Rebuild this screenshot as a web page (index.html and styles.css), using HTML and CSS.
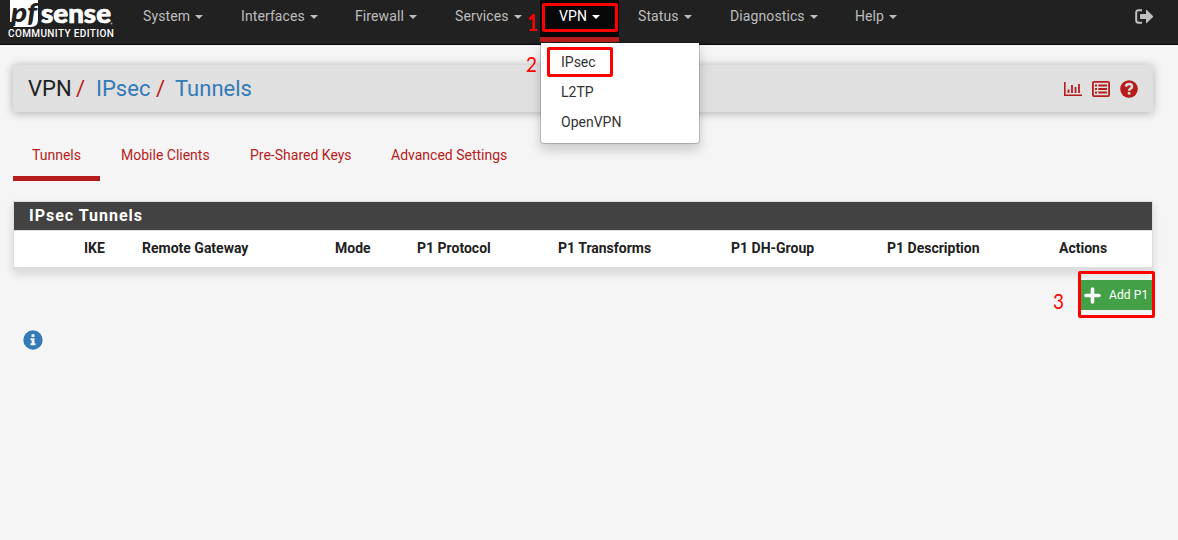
FILE: index.html
```
<!DOCTYPE html>
<html lang="en">
<head>
<meta charset="utf-8">
<title>VPN: IPsec: Tunnels</title>
<link rel="stylesheet" href="styles.css">
</head>
<body>
<header class="navbar">
  <a class="brand">
    <svg class="logo" width="106" height="28" viewBox="0 0 106 28">
      <path d="M2 0H30V20Q30 27 23 27H5.5L6.5 22H2Z" fill="#fff"/>
      <text class="logo-pf" x="3" y="22" textLength="26" lengthAdjust="spacingAndGlyphs">pf</text>
      <text class="logo-sense" x="33" y="22.5" textLength="70" lengthAdjust="spacingAndGlyphs">sense</text>
      <circle cx="103.5" cy="23.5" r="1" fill="#999"/>
    </svg>
    <span class="edition">COMMUNITY EDITION</span>
  </a>
  <nav class="menu">
    <a class="menu-item w-system">System<i class="caret"></i></a>
    <a class="menu-item w-interfaces">Interfaces<i class="caret"></i></a>
    <a class="menu-item w-firewall">Firewall<i class="caret"></i></a>
    <a class="menu-item w-services">Services<i class="caret"></i></a>
    <div class="menu-item w-vpn active">VPN<i class="caret"></i>
      <div class="dropdown"><a>IPsec</a><a>L2TP</a><a>OpenVPN</a></div>
    </div>
    <a class="menu-item w-status">Status<i class="caret"></i></a>
    <a class="menu-item w-diagnostics">Diagnostics<i class="caret"></i></a>
    <a class="menu-item">Help<i class="caret"></i></a>
  </nav>
  <svg class="logout" width="19" height="15" viewBox="0 0 19 14" preserveAspectRatio="none">
    <path d="M7 1.2H3.5Q1.2 1.2 1.2 3.5V10.5Q1.2 12.8 3.5 12.8H7" fill="none" stroke="#c0c0c0" stroke-width="2"/>
    <path d="M5.6 4.6H11V1.2Q11 .3 11.8 1L18 6.5Q18.5 7 18 7.5L11.8 13Q11 13.6 11 12.8V9.4H5.6Q5 9.4 5 8.8V5.2Q5 4.6 5.6 4.6Z" fill="#c0c0c0"/>
  </svg>
</header>
<main class="page">
  <div class="header">
    <div class="crumbs"><span class="c1">VPN</span><b class="s1">/</b><a class="c2">IPsec</a><b class="s2">/</b><a class="c3">Tunnels</a></div>
    <div class="tools">
      <svg width="18" height="18" viewBox="0 0 18 18" fill="none" stroke="#b71c1c">
        <path d="M.8 2V15.2H18" stroke-width="1.6"/>
        <path d="M4.5 9.5V13M8 5V13M11.5 7V13M15 4V13" stroke-width="1.8"/>
      </svg>
      <svg width="18" height="18" viewBox="0 0 18 18" fill="none" stroke="#b71c1c">
        <rect x=".9" y="1.9" width="16.2" height="14.2" rx="1" stroke-width="1.8"/>
        <path d="M3 5.5H5M3 9H5M3 12.5H5M6.3 5.5H15M6.3 9H15M6.3 12.5H15" stroke-width="1.8"/>
      </svg>
      <svg width="18" height="18" viewBox="0 0 18 18">
        <circle cx="9" cy="9" r="8.8" fill="#b71c1c"/>
        <path d="M5.7 6.5Q6.6 3.9 9.1 3.9Q12 3.9 12 6.5Q12 7.9 10.5 8.6Q9.1 9.4 9.1 10.8" fill="none" stroke="#e0e0e0" stroke-width="2.5"/>
        <rect x="7.8" y="12.1" width="2.6" height="2.5" fill="#e0e0e0"/>
      </svg>
    </div>
  </div>
  <nav class="tabs">
    <a class="tab w-tunnels selected">Tunnels</a>
    <a class="tab w-mobile">Mobile Clients</a>
    <a class="tab w-keys">Pre-Shared Keys</a>
    <a class="tab">Advanced Settings</a>
  </nav>
  <section class="panel">
    <h2 class="panel-title">IPsec Tunnels</h2>
    <div class="columns"><span></span><span>IKE</span><span>Remote Gateway</span><span>Mode</span><span>P1 Protocol</span><span>P1 Transforms</span><span>P1 DH-Group</span><span>P1 Description</span><span>Actions</span></div>
  </section>
  <div class="actions">
    <a class="add">
      <svg width="17" height="17" viewBox="0 0 17 17"><path d="M8.5 2V15M2 8.5H15" stroke="#fff" stroke-width="3.6" stroke-linecap="round"/></svg>
      <span>Add P1</span>
    </a>
  </div>
  <svg class="info" width="20" height="20" viewBox="0 0 20 20">
    <circle cx="10" cy="10" r="9.7" fill="#337ab7"/>
    <path d="M8.5 4.3H11.5V7H8.5ZM7.5 8.2H11.5V13.2H12.6V15.2H7.5V13.2H8.6V10.2H7.5Z" fill="#f5f5f5"/>
  </svg>
</main>
<div class="mark box-vpn"></div>
<div class="mark box-ipsec"></div>
<div class="mark box-add"></div>
<span class="step step-1">1</span>
<span class="step step-2">2</span>
<span class="step step-3">3</span>
</body>
</html>
```
FILE: styles.css
```
* { box-sizing: border-box; }
body {
  margin: 0;
  height: 540px;
  overflow: hidden;
  background: #f5f5f5;
  color: #212121;
  font: 14px/20px Roboto, sans-serif;
}
.navbar {
  display: flex;
  height: 45px;
  background: #212121;
  border-bottom: 1px solid #080808;
}
.brand { width: 124px; padding-left: 8px; color: #fff; }
.logo { display: block; overflow: visible; }
.logo-pf { font: italic 900 26px Lato, sans-serif; fill: #212121; }
.logo-sense { font: 900 26px Lato, sans-serif; fill: #fff; stroke: #fff; stroke-width: .7px; }
.edition {
  display: block;
  width: 108px;
  font-size: 10px;
  line-height: 11px;
  font-weight: 500;
  letter-spacing: .38px;
  white-space: nowrap;
}
.menu { display: flex; flex: 1; }
.menu-item {
  position: relative;
  display: flex;
  height: 42px;
  padding: 6px 0 0 19px;
  color: #bdbdbd;
  letter-spacing: .1px;
  white-space: nowrap;
}
.caret {
  width: 0;
  height: 0;
  margin: 9px 0 0 5px;
  border: 4px solid transparent;
  border-top-color: currentColor;
  border-bottom: 0;
}
.w-system { width: 98px; }
.w-interfaces { width: 114px; }
.w-firewall { width: 100px; }
.w-services { width: 104px; }
.w-vpn { width: 79px; }
.w-status { width: 92px; }
.w-diagnostics { width: 125px; }
.active { background: #080808; border-bottom: 5px solid #b71c1c; color: #fff; }
.dropdown {
  position: absolute;
  top: 42px;
  left: 0;
  z-index: 2;
  width: 160px;
  height: 102px;
  padding: 5px 0;
  border: 1px solid rgba(0, 0, 0, .18);
  border-radius: 0 0 4px 4px;
  background: #fff;
  background-clip: padding-box;
  box-shadow: 0 6px 12px rgba(0, 0, 0, .175);
  color: #333;
  letter-spacing: 0;
}
.dropdown a { display: block; height: 30px; padding: 4px 20px; }
.logout { margin: 9px 24px 0 0; }
.page { padding: 20px 25px 0 13px; }
.header {
  display: flex;
  justify-content: space-between;
  height: 47px;
  padding: 15px 15px 0;
  background: #e0e0e0;
  border-radius: 2px;
  box-shadow: 0 1px 10px rgba(0, 0, 0, .3);
}
.crumbs { display: flex; margin-top: -1px; font-size: 22px; line-height: 20px; }
.crumbs a { color: #337ab7; }
.crumbs b { color: #b71c1c; font-weight: 400; }
.c1 { width: 48px; }
.s1 { width: 20px; }
.c2 { width: 60px; }
.s2 { width: 19px; }
.tools { display: flex; gap: 10px; }
.tabs { display: flex; gap: 2px; margin-top: 24px; }
.tab { height: 45px; padding: 9px 0 0 19px; color: #b71c1c; white-space: nowrap; }
.w-tunnels { width: 87px; }
.w-mobile { width: 127px; }
.w-keys { width: 139px; }
.selected { border-bottom: 5px solid #b71c1c; }
.panel {
  height: 69px;
  margin-top: 20px;
  border: 1px solid #ddd;
  border-bottom-width: 3px;
  background: #fff;
  box-shadow: 0 4px 9px rgba(0, 0, 0, .13);
}
.panel-title {
  height: 28px;
  margin: 0;
  padding: 0 15px;
  background: #424242;
  color: #fff;
  font-size: 16px;
  line-height: 28px;
  font-weight: 700;
  letter-spacing: 1px;
}
.columns {
  display: grid;
  grid-template-columns: 70px 58px 193px 82px 141px 173px 156px 172px 1fr;
  border-top: 1px solid #ddd;
  padding-top: 7px;
  font-weight: 700;
}
.actions { display: flex; justify-content: flex-end; margin-top: 10px; }
.add {
  display: flex;
  align-items: center;
  gap: 8px;
  width: 73px;
  height: 30px;
  padding-left: 4px;
  background: #43a047;
  color: #fff;
  font-size: 12px;
  letter-spacing: .1px;
  white-space: nowrap;
}
.info { display: block; margin: 20px 0 0 10px; }
.mark { position: absolute; z-index: 3; border: 3px solid red; border-radius: 2px; }
.box-vpn { left: 542px; top: 3px; width: 76px; height: 29px; }
.box-ipsec { left: 547px; top: 47px; width: 66px; height: 30px; }
.box-add { left: 1078px; top: 271px; width: 77px; height: 47px; }
.step {
  position: absolute;
  z-index: 3;
  color: red;
  font: 22px/22px Lato, sans-serif;
  transform: scaleX(.86);
}
.step-1 { left: 526px; top: 12px; font-weight: 700; }
.step-2 { left: 525px; top: 53px; }
.step-3 { left: 1052px; top: 290px; }
```
